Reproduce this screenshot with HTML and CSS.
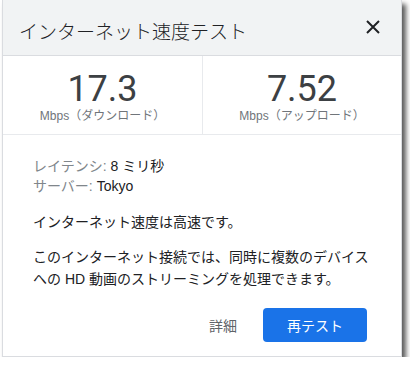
FILE: index.html
```html
<!DOCTYPE html>
<html lang="ja">
<head>
<meta charset="utf-8">
<link rel="stylesheet" href="styles.css">
</head>
<body>
<div class="dialog">
  <div class="header">
    <div class="title">インターネット速度テスト</div>
    <svg class="close" width="14" height="14" viewBox="0 0 14 14"><path d="M1 1L13 13M13 1L1 13" stroke="#202124" stroke-width="2" fill="none"/></svg>
  </div>
  <div class="stats">
    <div class="stat">
      <div class="num">17.3</div>
      <div class="unit">Mbps（ダウンロード）</div>
    </div>
    <div class="stat">
      <div class="num">7.52</div>
      <div class="unit">Mbps（アップロード）</div>
    </div>
  </div>
  <div class="body">
    <div class="meta">
      <div><span class="label">レイテンシ: </span>8 ミリ秒</div>
      <div><span class="label">サーバー: </span>Tokyo</div>
    </div>
    <p class="fast">インターネット速度は高速です。</p>
    <p class="desc">このインターネット接続では、同時に複数のデバイスへの HD 動画のストリーミングを処理できます。</p>
    <div class="actions">
      <span class="link">詳細</span>
      <span class="btn">再テスト</span>
    </div>
  </div>
</div>
</body>
</html>
```
FILE: styles.css
```css
html, body { margin: 0; padding: 0; background: #fff; }
body { font-family: "Liberation Sans", "Noto Sans CJK JP", sans-serif; color: #202124; }
.dialog {
  margin: 0 0 0 2px;
  width: 400px;
  height: 357px;
  border: 1px solid #dadce0;
  border-top: none;
  box-sizing: border-box;
  background: #fff;
  box-shadow: 4px 4px 5px rgba(0,0,0,0.65);
  display: flex;
  flex-direction: column;
}
.header {
  background: #f1f3f4;
  height: 56px;
  border-bottom: 1px solid #dadce0;
  box-sizing: border-box;
  display: flex;
  align-items: center;
  justify-content: space-between;
  padding: 0 21px 0 16px;
}
.title { font-size: 19px; color: #202124; font-family: "Noto Sans CJK JP", sans-serif; font-weight: 300; margin-top: 6px; }
.close { margin-top: -1px; }
.stats {
  display: grid;
  grid-template-columns: 1fr 1fr;
  border-bottom: 1px solid #e8eaed;
  height: 79px;
  box-sizing: border-box;
}
.stat { display: flex; flex-direction: column; align-items: center; padding-top: 14px; }
.stat + .stat { border-left: 1px solid #e8eaed; }
.num { font-size: 36px; line-height: 38px; color: #3c4043; font-family: Roboto, "Liberation Sans", sans-serif; }
.unit { font-size: 12px; color: #70757a; line-height: 16px; margin-top: 0; }
.body { padding: 21px 29px 0 30px; font-size: 14px; flex: 1; display: flex; flex-direction: column; color: #202124; }
.meta { line-height: 20px; }
.label { color: #80868b; }
.fast { margin: 16px 0 0; line-height: 20px; }
.desc { margin: 14px 0 0; line-height: 22px; }
.actions { display: flex; justify-content: flex-end; align-items: center; gap: 26px; margin-top: 18px; margin-right: 5px; }
.link { color: #5f6368; font-size: 14px; }
.btn {
  background: #1a73e8;
  color: #fff;
  font-size: 14px;
  border-radius: 4px;
  width: 104px;
  height: 34px;
  display: flex; align-items: center; justify-content: center;
}
```
